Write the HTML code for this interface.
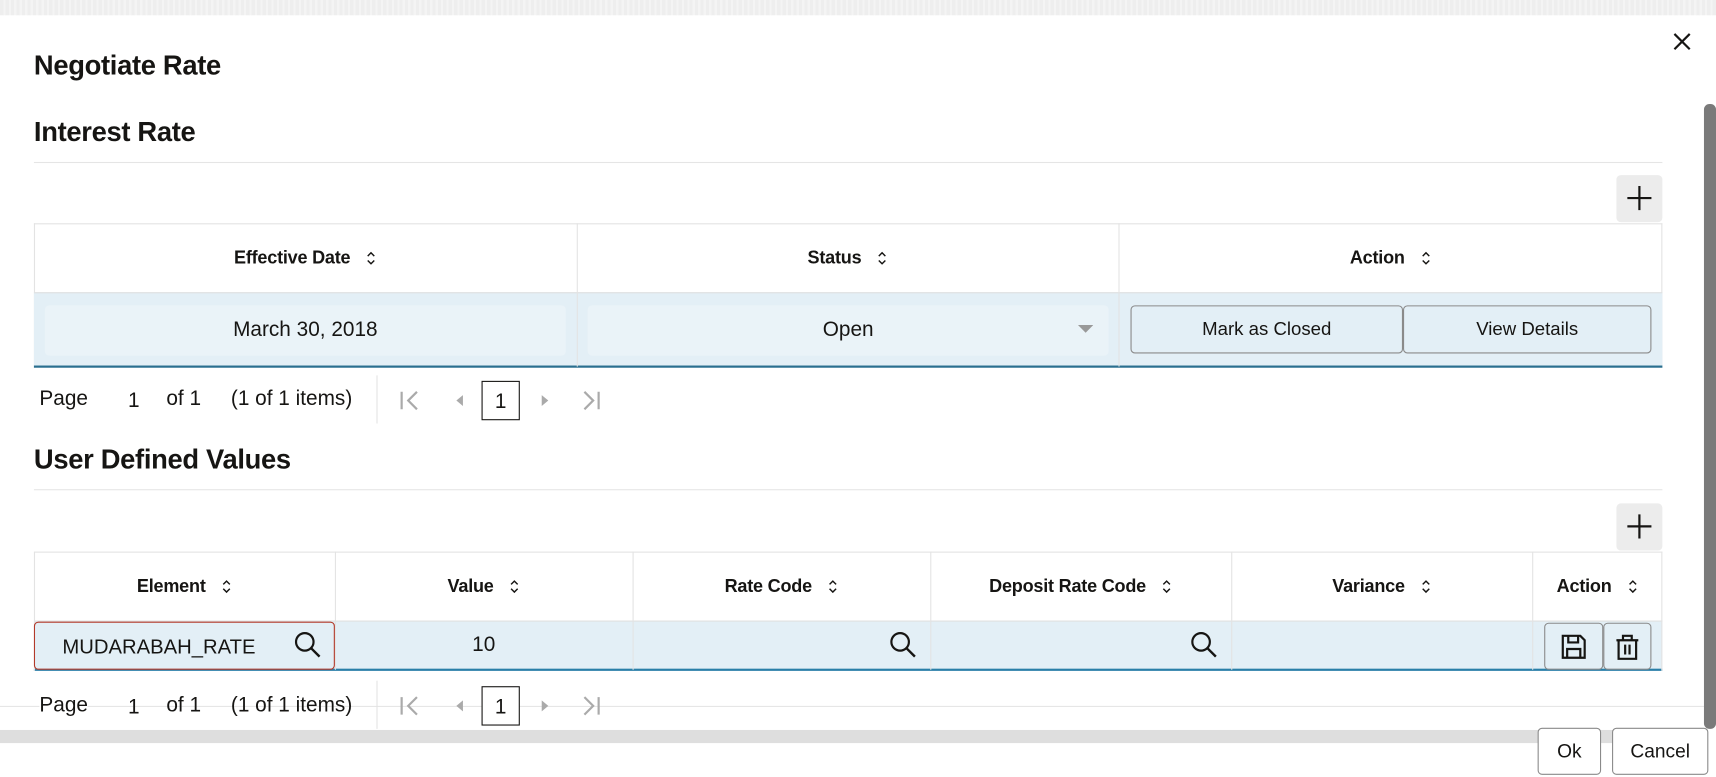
<!DOCTYPE html>
<html><head><meta charset="utf-8"><style>
*{box-sizing:border-box;margin:0;padding:0}
body{width:1716px;height:777px;background:#fff;font-family:"Liberation Sans",sans-serif;color:#161513;position:relative;overflow:hidden}
#w{position:absolute;left:0;top:0;width:1568px;height:710px;transform:scale(1.09439);transform-origin:0 0}
.a{position:absolute}
.h{font-weight:bold;font-size:25px;letter-spacing:-0.3px}
.line{height:1px;background:#e5e5e5}
.plus{background:#ececec;border-radius:4px;width:42px;height:43px}
.th{font-size:16.5px;font-weight:bold;text-align:center;display:flex;align-items:center;justify-content:center;letter-spacing:-0.2px}
.sort{display:inline-block;margin-left:14px;width:10px;height:14px}
.vl{width:1px;background:#e3e3e3}
.btn{border:1px solid #8a8a8a;border-radius:4px;background:#e3eff6;font-size:17px;display:flex;align-items:center;justify-content:center}
.pg{font-size:19px}
</style></head><body><div id="w">
<div class="a" style="left:0;top:0;width:1568px;height:14px;background:repeating-linear-gradient(90deg,#eee 0 3px,#f4f4f4 3px 5px)"></div>
<svg class="a" style="left:1528px;top:29px" width="18" height="18" viewBox="0 0 18 18"><path d="M2 2L16 16M16 2L2 16" stroke="#161513" stroke-width="2"/></svg>
<div class="a h" style="left:31px;top:46px">Negotiate Rate</div>
<div class="a h" style="left:31px;top:107px">Interest Rate</div>
<div class="a line" style="left:31px;top:148px;width:1488px"></div>
<div class="a plus" style="left:1477px;top:160px"></div>
<svg class="a" style="left:1486px;top:169px" width="24" height="24"><path d="M12 1V23M1 12H23" stroke="#161513" stroke-width="2"/></svg>

<div class="a" style="left:31px;top:204px;width:1488px;height:1px;background:#e3e3e3"></div>
<div class="a" style="left:31px;top:204px;width:1px;height:132px;background:#e3e3e3"></div>
<div class="a" style="left:1518px;top:204px;width:1px;height:132px;background:#e3e3e3"></div>
<div class="a th" style="left:31px;top:205px;width:496px;height:62px">Effective Date<svg class="sort" viewBox="0 0 10 14"><path d="M2 5L5 2L8 5M2 9L5 12L8 9" fill="none" stroke="#161513" stroke-width="1.3"/></svg></div>
<div class="a th" style="left:527px;top:205px;width:495px;height:62px">Status<svg class="sort" viewBox="0 0 10 14"><path d="M2 5L5 2L8 5M2 9L5 12L8 9" fill="none" stroke="#161513" stroke-width="1.3"/></svg></div>
<div class="a th" style="left:1022px;top:205px;width:497px;height:62px">Action<svg class="sort" viewBox="0 0 10 14"><path d="M2 5L5 2L8 5M2 9L5 12L8 9" fill="none" stroke="#161513" stroke-width="1.3"/></svg></div>
<div class="a" style="left:31px;top:267px;width:1488px;height:69px;background:#e3eff6;border-top:1px solid #e0e0e0;border-bottom:2px solid #2a6f8f"></div>
<div class="a vl" style="left:527px;top:204px;height:131px"></div>
<div class="a vl" style="left:1022px;top:204px;height:131px"></div>
<div class="a" style="left:41px;top:279px;width:476px;height:46px;background:#eaf3f8;border-radius:4px;font-size:19px;display:flex;align-items:center;justify-content:center">March 30, 2018</div>
<div class="a" style="left:537px;top:279px;width:476px;height:46px;background:#eaf3f8;border-radius:4px;font-size:19px;display:flex;align-items:center;justify-content:center">Open</div>
<svg class="a" style="left:985px;top:297px" width="14" height="8"><path d="M0 0H14L7 7Z" fill="#999"/></svg>
<div class="a btn" style="left:1033px;top:279px;width:249px;height:44px">Mark as Closed</div>
<div class="a btn" style="left:1282px;top:279px;width:227px;height:44px">View Details</div>

<div class="a pg" style="left:36px;top:354px">Page</div>
<div class="a pg" style="left:117px;top:356px">1</div>
<div class="a pg" style="left:152px;top:354px">of 1</div>
<div class="a pg" style="left:211px;top:354px">(1 of 1 items)</div>
<div class="a vl" style="left:344px;top:343px;height:44px"></div>
<svg class="a" style="left:364px;top:356px" width="200" height="20"><path d="M3 2V18M17 2L9 10L17 18" fill="none" stroke="#aaa" stroke-width="2"/><path d="M59 5L53 10L59 15Z" fill="#aaa"/><path d="M131 5L137 10L131 15Z" fill="#aaa"/><path d="M170 2L178 10L170 18M183 2V18" fill="none" stroke="#aaa" stroke-width="2"/></svg>
<div class="a pg" style="left:440px;top:348px;width:35px;height:36px;border:1px solid #161513;display:flex;align-items:center;justify-content:center;padding-top:4px">1</div>

<div class="a h" style="left:31px;top:406px">User Defined Values</div>
<div class="a line" style="left:31px;top:447px;width:1488px"></div>
<div class="a plus" style="left:1477px;top:460px"></div>
<svg class="a" style="left:1486px;top:469px" width="24" height="24"><path d="M12 1V23M1 12H23" stroke="#161513" stroke-width="2"/></svg>

<div class="a" style="left:31px;top:504px;width:1488px;height:1px;background:#e3e3e3"></div>
<div class="a" style="left:31px;top:567px;width:1488px;height:46px;background:#e3eff6;border-top:1px solid #e0e0e0;border-bottom:2px solid #2a7fa8"></div>
<div class="a" style="left:31px;top:504px;width:1px;height:109px;background:#e3e3e3"></div>
<div class="a" style="left:1518px;top:504px;width:1px;height:109px;background:#e3e3e3"></div>
<div class="a vl" style="left:306px;top:504px;height:108px"></div>
<div class="a vl" style="left:578px;top:504px;height:108px"></div>
<div class="a vl" style="left:850px;top:504px;height:108px"></div>
<div class="a vl" style="left:1125px;top:504px;height:108px"></div>
<div class="a vl" style="left:1400px;top:504px;height:108px"></div>
<div class="a th" style="left:31px;top:505px;width:275px;height:62px">Element<svg class="sort" viewBox="0 0 10 14"><path d="M2 5L5 2L8 5M2 9L5 12L8 9" fill="none" stroke="#161513" stroke-width="1.3"/></svg></div>
<div class="a th" style="left:306px;top:505px;width:272px;height:62px">Value<svg class="sort" viewBox="0 0 10 14"><path d="M2 5L5 2L8 5M2 9L5 12L8 9" fill="none" stroke="#161513" stroke-width="1.3"/></svg></div>
<div class="a th" style="left:578px;top:505px;width:272px;height:62px">Rate Code<svg class="sort" viewBox="0 0 10 14"><path d="M2 5L5 2L8 5M2 9L5 12L8 9" fill="none" stroke="#161513" stroke-width="1.3"/></svg></div>
<div class="a th" style="left:850px;top:505px;width:275px;height:62px">Deposit Rate Code<svg class="sort" viewBox="0 0 10 14"><path d="M2 5L5 2L8 5M2 9L5 12L8 9" fill="none" stroke="#161513" stroke-width="1.3"/></svg></div>
<div class="a th" style="left:1125px;top:505px;width:275px;height:62px">Variance<svg class="sort" viewBox="0 0 10 14"><path d="M2 5L5 2L8 5M2 9L5 12L8 9" fill="none" stroke="#161513" stroke-width="1.3"/></svg></div>
<div class="a th" style="left:1400px;top:505px;width:119px;height:62px">Action<svg class="sort" viewBox="0 0 10 14"><path d="M2 5L5 2L8 5M2 9L5 12L8 9" fill="none" stroke="#161513" stroke-width="1.3"/></svg></div>
<div class="a" style="left:31px;top:568px;width:275px;height:44px;border:1px solid #b33a2a;border-radius:4px;background:#e3eff6;font-size:18.5px;padding:11px 0 0 25px">MUDARABAH_RATE</div>
<svg class="a" style="left:268px;top:576px" width="26" height="26" viewBox="0 0 26 26"><circle cx="10.5" cy="10.5" r="8" fill="none" stroke="#161513" stroke-width="2"/><path d="M16.5 16.5L24 24" stroke="#161513" stroke-width="2.2"/></svg>
<div class="a" style="left:306px;top:579px;width:272px;text-align:center;font-size:19px">10</div>
<svg class="a" style="left:812px;top:576px" width="26" height="26" viewBox="0 0 26 26"><circle cx="10.5" cy="10.5" r="8" fill="none" stroke="#161513" stroke-width="2"/><path d="M16.5 16.5L24 24" stroke="#161513" stroke-width="2.2"/></svg>
<svg class="a" style="left:1087px;top:576px" width="26" height="26" viewBox="0 0 26 26"><circle cx="10.5" cy="10.5" r="8" fill="none" stroke="#161513" stroke-width="2"/><path d="M16.5 16.5L24 24" stroke="#161513" stroke-width="2.2"/></svg>
<div class="a btn" style="left:1411px;top:569px;width:54px;height:43px"><svg width="26" height="26" viewBox="0 0 26 26"><path d="M3 3H19L23 7V23H3Z" fill="none" stroke="#161513" stroke-width="2"/><path d="M8 3V9H17V3M7 23V15H19V23" fill="none" stroke="#161513" stroke-width="2"/></svg></div>
<div class="a btn" style="left:1465px;top:569px;width:44px;height:43px"><svg width="24" height="26" viewBox="0 0 24 26"><path d="M2 7H22M8 7V3H16V7M4 7V24H20V7M10 11V20M14 11V20" fill="none" stroke="#161513" stroke-width="2"/></svg></div>

<div class="a line" style="left:0;top:645px;width:1557px"></div>
<div class="a pg" style="left:36px;top:634px;background:#fff">Page</div>
<div class="a pg" style="left:117px;top:636px">1</div>
<div class="a pg" style="left:152px;top:634px">of 1</div>
<div class="a pg" style="left:211px;top:634px">(1 of 1 items)</div>
<div class="a vl" style="left:344px;top:622px;height:44px"></div>
<svg class="a" style="left:364px;top:635px" width="200" height="20"><path d="M3 2V18M17 2L9 10L17 18" fill="none" stroke="#aaa" stroke-width="2"/><path d="M59 5L53 10L59 15Z" fill="#aaa"/><path d="M131 5L137 10L131 15Z" fill="#aaa"/><path d="M170 2L178 10L170 18M183 2V18" fill="none" stroke="#aaa" stroke-width="2"/></svg>
<div class="a pg" style="left:440px;top:627px;width:35px;height:36px;border:1px solid #161513;background:#fff;display:flex;align-items:center;justify-content:center;padding-top:4px">1</div>

<div class="a" style="left:0;top:667px;width:1557px;height:12px;background:#dedede"></div>
<div class="a" style="left:1557px;top:95px;width:11px;height:571px;background:#7a7a7a;border-radius:5px"></div>

<div class="a btn" style="left:1405px;top:665px;width:58px;height:43px;background:#fff;font-size:17.5px">Ok</div>
<div class="a btn" style="left:1473px;top:665px;width:88px;height:43px;background:#fff;font-size:17.5px">Cancel</div>
</div></body></html>
